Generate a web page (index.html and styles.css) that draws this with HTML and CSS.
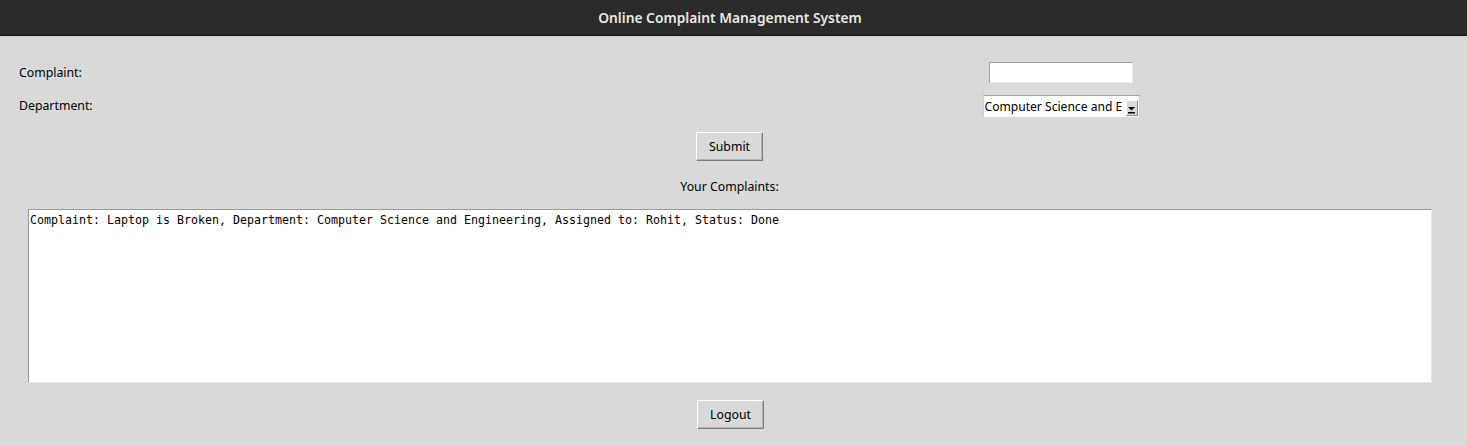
FILE: index.html
```html
<!DOCTYPE html>
<html>
<head>
<meta charset="utf-8">
<title>Online Complaint Management System</title>
<link rel="stylesheet" href="styles.css">
</head>
<body>
<header class="titlebar">Online Complaint Management System</header>
<main class="app">
  <div class="form">
    <label class="lbl">Complaint:</label>
    <div class="cell"><div class="entry"></div></div>
    <label class="lbl">Department:</label>
    <div class="cell">
      <div class="optmenu">
        <span class="optval">Computer Science and E</span>
        <span class="optarrow"><svg width="9" height="8" viewBox="0 0 9 8"><path d="M1 1h7L4.5 4.5z" fill="#000"/><rect x="1" y="6" width="7" height="1.5" fill="#000"/></svg></span>
      </div>
    </div>
  </div>
  <div class="center">
    <button class="btn btn-submit">Submit</button>
    <div class="heading">Your Complaints:</div>
  </div>
  <div class="textbox">Complaint: Laptop is Broken, Department: Computer Science and Engineering, Assigned to: Rohit, Status: Done</div>
  <div class="center">
    <button class="btn btn-logout">Logout</button>
  </div>
</main>
</body>
</html>
```
FILE: styles.css
```css
html, body {
  margin: 0;
  padding: 0;
  background: #d9d9d9;
  font-family: "Noto Sans", "Open Sans", sans-serif;
  font-size: 12.3px;
  color: #000;
}
.titlebar {
  height: 36px;
  box-sizing: border-box;
  border-bottom: 1px solid #111;
  background: #2b2b2b;
  color: #e8e8e8;
  font-weight: 600;
  font-size: 13.8px;
  display: flex;
  align-items: center;
  justify-content: center;
  padding: 0 7px 1px 0;
}
.app {
  display: flex;
  flex-direction: column;
}
.form {
  display: grid;
  grid-template-columns: 1fr 160px;
  row-gap: 12px;
  padding: 26px 326px 0 19px;
  align-items: center;
}
.lbl {
  line-height: 18px;
}
.cell {
  display: flex;
  justify-content: center;
}
.entry {
  width: 144px;
  height: 21px;
  box-sizing: border-box;
  background: #fff;
  border: 1px solid;
  border-color: #a2a2a2 #ececec #ececec #a2a2a2;
}
.optmenu {
  width: 157px;
  height: 22px;
  box-sizing: border-box;
  background: #fff;
  border-top: 1px solid #a8a8a8;
  border-left: 1px solid #d0d0d0;
  border-right: 1px solid #d0d0d0;
  display: flex;
  align-items: center;
  padding-left: 1px;
}
.optval {
  flex: 1;
  white-space: nowrap;
  overflow: hidden;
  line-height: 18px;
  font-size: 12.1px;
}
.optarrow {
  width: 12px;
  height: 16px;
  margin-right: 1px;
  margin-top: 2px;
  box-sizing: border-box;
  background: #d9d9d9;
  border: 1px solid;
  border-color: #fff #8a8a8a #8a8a8a #fff;
  display: flex;
  align-items: flex-end;
  justify-content: center;
  padding-bottom: 1px;
}
.center {
  display: flex;
  flex-direction: column;
  align-items: center;
  padding-right: 8px;
}
.btn {
  font-family: inherit;
  font-size: 12.3px;
  background: #d9d9d9;
  color: #000;
  border: 1px solid;
  border-color: #fff #7d7d7d #7d7d7d #fff;
  box-shadow: inset -1px -1px 0 #b5b5b5;
  width: 67px;
  height: 29px;
  padding: 0 0 1px;
  margin: 0;
}
.btn-submit {
  margin-top: 15px;
}
.heading {
  margin-top: 17px;
  line-height: 18px;
}
.textbox {
  margin: 13px 0 0 28px;
  width: 1404px;
  height: 174px;
  box-sizing: border-box;
  background: #fff;
  border: 1px solid;
  border-color: #9a9a9a #e8e8e8 #e8e8e8 #9a9a9a;
  font-family: "DejaVu Sans Mono", monospace;
  font-size: 11.63px;
  line-height: 18px;
  padding: 1px 0 0 1px;
  white-space: pre;
}
.btn-logout {
  margin-top: 17px;
  margin-left: 2px;
}
```
